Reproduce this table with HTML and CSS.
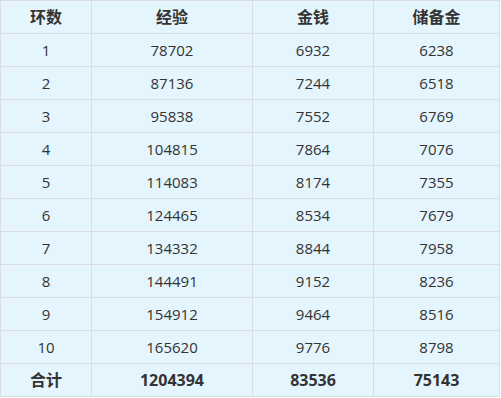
FILE: index.html
```html
<!DOCTYPE html>
<html lang="zh">
<head>
    <meta charset="UTF-8">
    <meta name="viewport" content="width=device-width, initial-scale=1.0">
    <link rel="stylesheet" href="styles.css">
    <title>环数</title>
</head>
<body>
    <table class="rings">
        <thead>
            <tr>
                <th class="col-ring">环数</th>
                <th class="col-exp">经验</th>
                <th class="col-gold">金钱</th>
                <th class="col-save">储备金</th>
            </tr>
        </thead>
        <tbody>
            <tr><td>1</td><td>78702</td><td>6932</td><td>6238</td></tr>
            <tr><td>2</td><td>87136</td><td>7244</td><td>6518</td></tr>
            <tr><td>3</td><td>95838</td><td>7552</td><td>6769</td></tr>
            <tr><td>4</td><td>104815</td><td>7864</td><td>7076</td></tr>
            <tr><td>5</td><td>114083</td><td>8174</td><td>7355</td></tr>
            <tr><td>6</td><td>124465</td><td>8534</td><td>7679</td></tr>
            <tr><td>7</td><td>134332</td><td>8844</td><td>7958</td></tr>
            <tr><td>8</td><td>144491</td><td>9152</td><td>8236</td></tr>
            <tr><td>9</td><td>154912</td><td>9464</td><td>8516</td></tr>
            <tr><td>10</td><td>165620</td><td>9776</td><td>8798</td></tr>
        </tbody>
        <tfoot>
            <tr><th>合计</th><th>1204394</th><th>83536</th><th>75143</th></tr>
        </tfoot>
    </table>
</body>
</html>
```

FILE: styles.css
```css
body {
    margin: 0;
    background: #fff;
}

.rings {
    width: 500px;
    border-collapse: collapse;
    background-color: #e5f5fd;
    font-family: "Open Sans", "Noto Sans CJK SC", sans-serif;
    font-size: 15px;
    color: #333;
}

.rings th,
.rings td {
    height: 32px;
    padding: 0;
    border: 1px solid #d9dde0;
    text-align: center;
    line-height: 20px;
}

.rings th {
    font-size: 16px;
    font-weight: bold;
}

.col-ring { width: 90px; }
.col-exp { width: 160px; }
.col-gold { width: 120px; }
.col-save { width: 125px; }
```
